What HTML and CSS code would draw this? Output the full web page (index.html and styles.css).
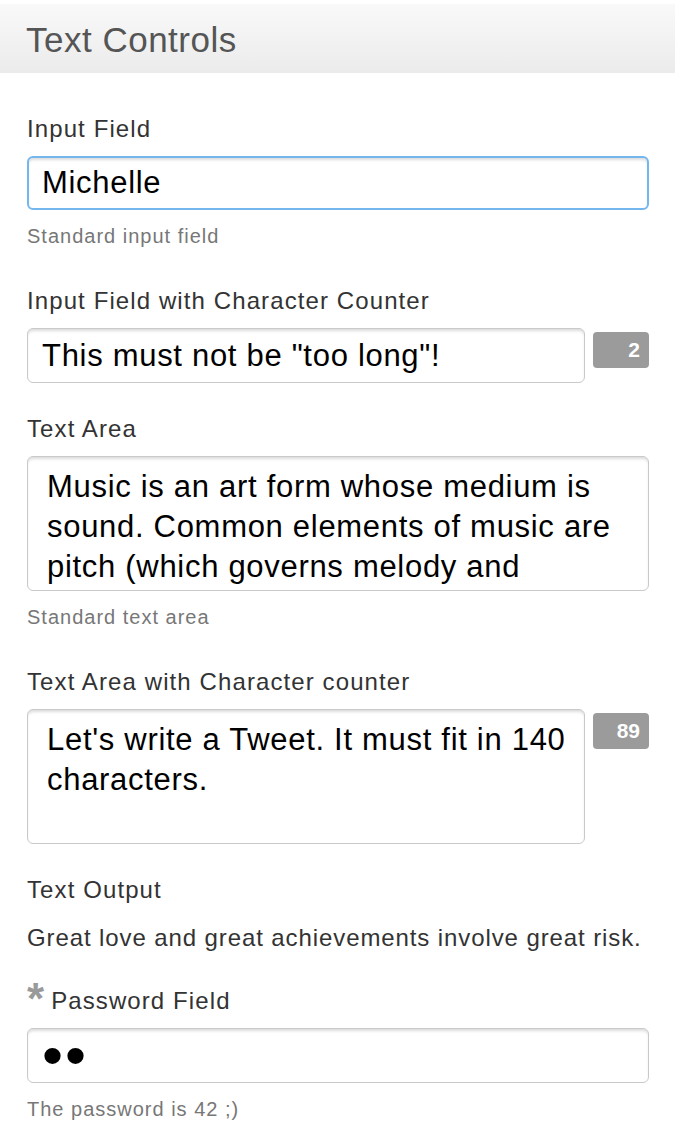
FILE: index.html
```html
<!DOCTYPE html>
<html lang="en">
<head>
<meta charset="utf-8">
<title>Text Controls</title>
<link rel="stylesheet" href="styles.css">
</head>
<body>
  <header class="page-header">
    <h1 class="page-title">Text Controls</h1>
  </header>
  <main class="content">
    <div class="group">
      <label class="label" for="f1">Input Field</label>
      <input id="f1" class="field field--focused" type="text" value="Michelle" readonly>
      <p class="hint">Standard input field</p>
    </div>

    <div class="group">
      <label class="label" for="f2">Input Field with Character Counter</label>
      <div class="counter-row">
        <input id="f2" class="field" type="text" value="This must not be &quot;too long&quot;!" readonly>
        <span class="badge">2</span>
      </div>
    </div>

    <div class="group">
      <label class="label" for="f3">Text Area</label>
      <textarea id="f3" class="field area" readonly>Music is an art form whose medium is sound. Common elements of music are pitch (which governs melody and harmony), rhythm (and its associated concepts tempo, meter, and articulation), dynamics, and the sonic qualities of timbre and texture.</textarea>
      <p class="hint">Standard text area</p>
    </div>

    <div class="group">
      <label class="label" for="f4">Text Area with Character counter</label>
      <div class="counter-row">
        <textarea id="f4" class="field area" readonly>Let's write a Tweet. It must fit in 140 characters.</textarea>
        <span class="badge">89</span>
      </div>
    </div>

    <div class="group group--output">
      <div class="label">Text Output</div>
      <p class="output">Great love and great achievements involve great risk.</p>
    </div>

    <div class="group">
      <label class="label" for="f5"><span class="required">*</span>Password Field</label>
      <input id="f5" class="field field--password" type="password" value="42" readonly>
      <p class="hint">The password is 42 ;)</p>
    </div>
  </main>
</body>
</html>
```

FILE: styles.css
```css
html, body {
  margin: 0;
  padding: 0;
  background: #ffffff;
}

body {
  font-family: "Liberation Sans", Arial, Helvetica, sans-serif;
  color: #333333;
}

.page-header {
  margin-top: 4px;
  height: 69px;
  background: linear-gradient(to bottom, #f9f9f9 0%, #ebebeb 100%);
  display: flex;
  align-items: center;
  padding-left: 26px;
}

.page-title {
  margin: 0;
  padding-top: 2px;
  font-size: 35px;
  font-weight: normal;
  color: #555555;
  letter-spacing: 0.5px;
}

.content {
  padding: 41px 26px 0 27px;
}

.group {
  margin-bottom: 31px;
}

.group--output {
  margin-bottom: 33px;
}

.label {
  display: block;
  font-size: 24px;
  line-height: 30px;
  letter-spacing: 1.1px;
  color: #333333;
  margin-bottom: 12px;
}

.field {
  display: block;
  box-sizing: border-box;
  width: 100%;
  height: 55px;
  margin: 0;
  padding: 0 14px;
  border: 1px solid #c9c9c9;
  border-radius: 6px;
  background: #ffffff;
  box-shadow: inset 0 3px 3px -1px rgba(0, 0, 0, 0.14);
  font-family: "Liberation Sans", Arial, Helvetica, sans-serif;
  font-size: 31px;
  letter-spacing: 0.7px;
  color: #000000;
  outline: none;
  -webkit-appearance: none;
  appearance: none;
}

.field--focused {
  border: 2px solid #74b6ee;
  padding-left: 13px;
  height: 54px;
}

.field--password {
  font-size: 60px;
  letter-spacing: 2px;
  padding-left: 14px;
}

.area {
  height: 135px;
  padding: 10px 10px 10px 19px;
  line-height: 40px;
  resize: none;
  overflow: hidden;
}

.counter-row {
  display: flex;
  align-items: flex-start;
  gap: 8px;
}

.counter-row .field {
  flex: 1;
  width: auto;
  min-width: 0;
}

.badge {
  flex: none;
  box-sizing: border-box;
  width: 56px;
  height: 36px;
  margin-top: 4px;
  padding-right: 9px;
  border-radius: 4px;
  background: #9b9b9b;
  color: #ffffff;
  font-size: 21px;
  font-weight: bold;
  line-height: 36px;
  text-align: right;
}

.hint {
  margin: 13px 0 0;
  padding-bottom: 6px;
  font-size: 20px;
  line-height: 26px;
  letter-spacing: 1px;
  color: #777777;
}

.output {
  margin: 18px 0 0;
  font-size: 24px;
  line-height: 30px;
  letter-spacing: 0.9px;
  color: #333333;
}

.required {
  display: inline-block;
  font-size: 44px;
  font-weight: bold;
  color: #9a9a9a;
  line-height: 0;
  vertical-align: -5px;
  margin-right: 7px;
  letter-spacing: 0;
}
```
